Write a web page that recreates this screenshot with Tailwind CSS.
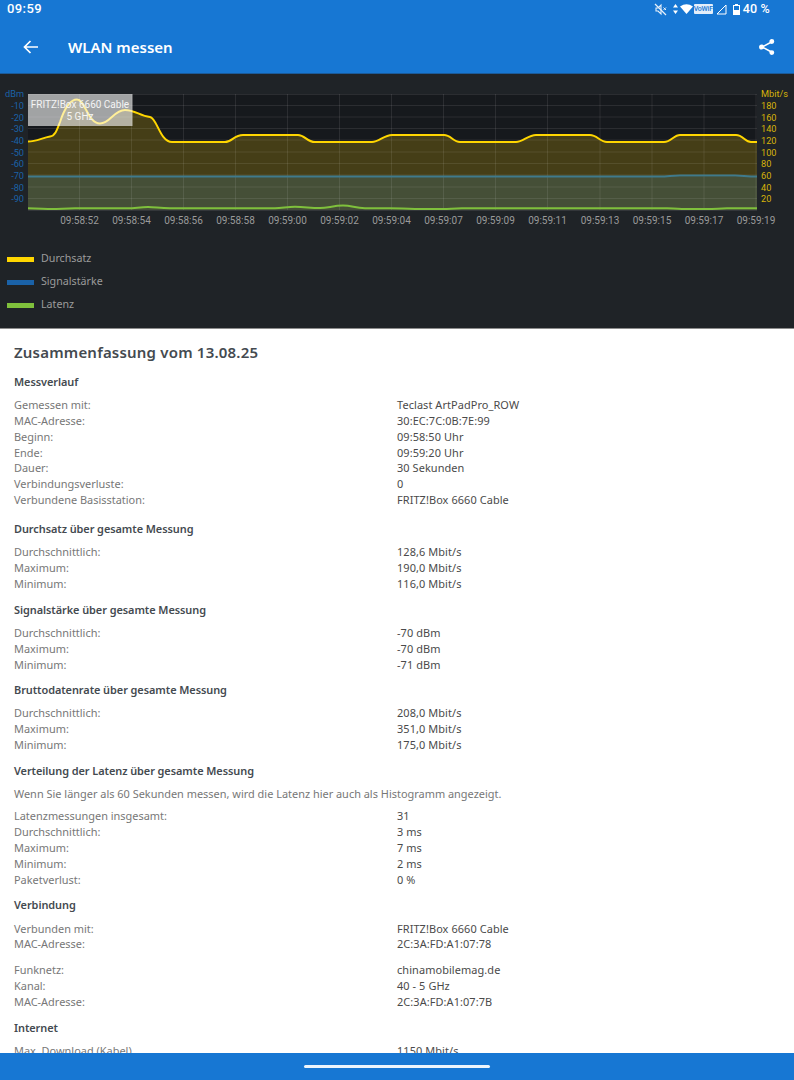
<!DOCTYPE html>
<html lang="de"><head><meta charset="utf-8"><title>WLAN messen</title>
<script src="https://cdn.jsdelivr.net/npm/@tailwindcss/browser@4"></script></head>
<body class="bg-white">
<div class="w-[794px] h-[1080px] flex flex-col overflow-hidden [font-family:'Noto_Sans',sans-serif]">
  <header class="bg-[#1777d3] text-white shrink-0 h-[74px] flex flex-col border-b border-[#1b5a98]">
    <div class="h-[21px] pb-[3px] flex items-center justify-between pl-[7px] pr-[24px] [font-family:Roboto,sans-serif]">
      <span class="text-[13px] font-medium tracking-[0.4px]">09:59</span>
      <div class="flex items-center">
        <svg width="13" height="13" viewBox="0 0 13 13" class="mr-[6px]" fill="none" stroke="#e8f1fa"><path d="M2 5h2l3-3v9L4 8H2z" stroke-width="1.1"/><path d="M1 1l11 11" stroke-width="1.3"/><path d="M9.500 4.500l2.500 2.500M12 4.500L9.500 7" stroke-width="1"/></svg>
        <svg width="5" height="10" viewBox="0 0 5 10" class="mr-[2px]" fill="#fff"><path d="M2.500 0L5 3.500H0zM2.500 10L0 6.500h5z"/></svg>
        <svg width="13" height="10" viewBox="0 0 13 10" class="mr-[1px]" fill="#fff"><path d="M0 2.500Q6.500-2 13 2.500L6.500 10z"/></svg>
        <span class="w-[19px] h-[10px] mr-[3px] rounded-[1px] bg-[#e3eefa] text-[#1777d3] text-[7px] leading-[10px] text-center font-medium tracking-[-0.2px]">VoWiFi</span>
        <svg width="11" height="11" viewBox="0 0 11 11" class="mr-[6px]" fill="none" stroke="#fff"><path d="M10 1v9H1z"/></svg>
        <svg width="7" height="11" viewBox="0 0 7 11" class="mr-[3px]" fill="#fff"><path fill-rule="evenodd" d="M2 0h3v1h2v10H0V1h2zM1 2v4h5V2z"/></svg>
        <span class="text-[12.5px] font-medium tracking-[0.2px]">40 %</span>
      </div>
    </div>
    <div class="h-[52px] flex items-center pl-[23px] pr-[18px]">
      <svg width="16" height="14" viewBox="0 0 16 14" fill="none" stroke="#fff" stroke-width="1.7"><path d="M15 7H2M7.500 1L1.500 7l6 6"/></svg>
      <span class="ml-[29px] text-[15px] font-semibold">WLAN messen</span>
      <svg width="18" height="18" viewBox="0 0 18 18" class="ml-auto" fill="#fff" stroke="#fff" stroke-width="1.5"><path d="M13.500 4L4 9l9.500 5" fill="none"/><circle cx="13.800" cy="3.500" r="1.700"/><circle cx="3.600" cy="9" r="1.800"/><circle cx="13.800" cy="14.600" r="1.700"/></svg>
    </div>
  </header>

  <section class="bg-[#1f2327] shrink-0 h-[255px] border-b border-[#8c8c8c] flex flex-col [font-family:Roboto,sans-serif]">
    <svg width="794" height="167" viewBox="0 74 794 167" class="block shrink-0 text-[9.2px]">
      <rect x="28" y="94" width="729" height="116" fill="#16191d"/>
      <path d="M28 141.500C36 141.500 42 138 50 136.500C55 136 57 130 60 122C64 110 70 99.500 77 99.500C85 99.500 88 123.500 100 123.500C110 123.500 114 110 125 110C135 110 140 116 150 117C157 118 160 142 172 142H225C232 142 234 135 243 135H298C305 135 307 142 315 142H372C379 142 384 135 392 135H444C451 135 453 142 460 142H516C523 142 528 135 536 135H590C597 135 600 142 607 142H664C671 142 674 135 680 135H736C743 135 745 142 751 142H757V210H28Z" fill="#453e17"/>
      <rect x="28" y="176.500" width="729" height="33.500" fill="#454f37"/>
      <g stroke="#fff" stroke-opacity=".09" stroke-width="1">
        <path d="M28 94.500H757M28 105.500H757M28 117H757M28 128.500H757M28 140H757M28 152H757M28 163.500H757M28 175H757M28 187H757M28 198.500H757M28 210.500H757"/>
        <path d="M79.500 94V210M131.500 94V210M183.500 94V210M235.500 94V210M287.500 94V210M339.500 94V210M391.500 94V210M443.500 94V210M495.500 94V210M547.500 94V210M600 94V210M652 94V210M704 94V210M756 94V210"/>
      </g>
      <path d="M28 176.500H660C668 176.500 672 175.500 680 175.500H735C742 175.500 747 176.500 757 176.500" fill="none" stroke="#3f7a8c" stroke-width="2"/>
      <path d="M28 208.200C38 208.200 45 209 52 209C60 209 65 208.200 75 208.200H128C135 208.200 140 207 148 207C155 207 160 208.200 170 208.200H275C282 208.200 287 206.800 295 206.800C305 206.800 310 208 320 208C328 208 333 205.600 343 205.600C352 205.600 355 208.200 365 208.200H390C400 208.200 405 209 415 209H443C450 209 453 208.300 462 208.300H667C672 208.300 675 209 682 209H707C715 209 720 208.300 727 208.300H757" fill="none" stroke="#7fc03c" stroke-width="2"/>
      <path d="M28 141.500C36 141.500 42 138 50 136.500C55 136 57 130 60 122C64 110 70 99.500 77 99.500C85 99.500 88 123.500 100 123.500C110 123.500 114 110 125 110C135 110 140 116 150 117C157 118 160 142 172 142H225C232 142 234 135 243 135H298C305 135 307 142 315 142H372C379 142 384 135 392 135H444C451 135 453 142 460 142H516C523 142 528 135 536 135H590C597 135 600 142 607 142H664C671 142 674 135 680 135H736C743 135 745 142 751 142H757" fill="none" stroke="#ffd600" stroke-width="2"/>
      <rect x="28" y="94" width="104.500" height="32" fill="#fff" fill-opacity=".6"/>
      <g fill="#f4f4f4" text-anchor="middle" class="text-[10px]">
        <text x="80" y="107.500">FRITZ!Box 6660 Cable</text><text x="80" y="119.500">5 GHz</text>
      </g>
      <g fill="#1a62a8" text-anchor="end">
        <text x="24" y="97">dBm</text><text x="24" y="108.500">-10</text><text x="24" y="120.500">-20</text><text x="24" y="132">-30</text><text x="24" y="143.500">-40</text><text x="24" y="155.500">-50</text><text x="24" y="167">-60</text><text x="24" y="178.500">-70</text><text x="24" y="190.500">-80</text><text x="24" y="202">-90</text>
      </g>
      <g fill="#d6b30a">
        <text x="761" y="97">Mbit/s</text><text x="761" y="108.500">180</text><text x="761" y="120.500">160</text><text x="761" y="132">140</text><text x="761" y="143.500">120</text><text x="761" y="155.500">100</text><text x="761" y="167">80</text><text x="761" y="178.500">60</text><text x="761" y="190.500">40</text><text x="761" y="202">20</text>
      </g>
      <g fill="#9a9a9a" text-anchor="middle" class="text-[10px]">
        <text x="79.500" y="224">09:58:52</text><text x="131.500" y="224">09:58:54</text><text x="183.500" y="224">09:58:56</text><text x="235.500" y="224">09:58:58</text><text x="287.500" y="224">09:59:00</text><text x="339.500" y="224">09:59:02</text><text x="391.500" y="224">09:59:04</text><text x="443.500" y="224">09:59:07</text><text x="495.500" y="224">09:59:09</text><text x="547.500" y="224">09:59:11</text><text x="600" y="224">09:59:13</text><text x="652" y="224">09:59:15</text><text x="704" y="224">09:59:17</text><text x="756" y="224">09:59:19</text>
      </g>
    </svg>
    <ul class="flex flex-col gap-[7px] pl-[7px] mt-[9px] text-[10.7px] leading-[16px] text-[#9b9b9b] [font-family:'Noto_Sans',sans-serif]">
      <li class="flex items-center gap-[7px]"><span class="w-[27px] h-[5px] bg-[#ffd600] mt-[2px]"></span>Durchsatz</li>
      <li class="flex items-center gap-[7px]"><span class="w-[27px] h-[5px] bg-[#1a62a8] mt-[2px]"></span>Signalstärke</li>
      <li class="flex items-center gap-[7px]"><span class="w-[27px] h-[5px] bg-[#7fc03c] mt-[2px]"></span>Latenz</li>
    </ul>
  </section>

  <main class="flex-1 overflow-hidden px-[14px] pt-[12px] text-[10.95px] leading-[15.85px] text-[#777]">
    <h1 class="text-[15px] leading-[22px] font-semibold text-[#444a50] tracking-[0.2px]">Zusammenfassung vom 13.08.25</h1>
    <h2 class="mt-[11px] h-[18px] font-semibold tracking-[-0.07px] text-[#444a50]">Messverlauf</h2>
    <dl class="mt-[5px] grid grid-cols-[383px_1fr]">
      <dt>Gemessen mit:</dt><dd class="text-[#4a4a4a] tracking-[0.08px]">Teclast ArtPadPro_ROW</dd>
      <dt>MAC-Adresse:</dt><dd class="text-[#4a4a4a] tracking-[0.08px]">30:EC:7C:0B:7E:99</dd>
      <dt>Beginn:</dt><dd class="text-[#4a4a4a] tracking-[0.08px]">09:58:50 Uhr</dd>
      <dt>Ende:</dt><dd class="text-[#4a4a4a] tracking-[0.08px]">09:59:20 Uhr</dd>
      <dt>Dauer:</dt><dd class="text-[#4a4a4a] tracking-[0.08px]">30 Sekunden</dd>
      <dt>Verbindungsverluste:</dt><dd class="text-[#4a4a4a] tracking-[0.08px]">0</dd>
      <dt>Verbundene Basisstation:</dt><dd class="text-[#4a4a4a] tracking-[0.08px]">FRITZ!Box 6660 Cable</dd>
    </dl>
    <h2 class="mt-[13px] h-[18px] font-semibold tracking-[-0.07px] text-[#444a50]">Durchsatz über gesamte Messung</h2>
    <dl class="mt-[5px] grid grid-cols-[383px_1fr]">
      <dt>Durchschnittlich:</dt><dd class="text-[#4a4a4a] tracking-[0.08px]">128,6 Mbit/s</dd>
      <dt>Maximum:</dt><dd class="text-[#4a4a4a] tracking-[0.08px]">190,0 Mbit/s</dd>
      <dt>Minimum:</dt><dd class="text-[#4a4a4a] tracking-[0.08px]">116,0 Mbit/s</dd>
    </dl>
    <h2 class="mt-[11px] h-[18px] font-semibold tracking-[-0.07px] text-[#444a50]">Signalstärke über gesamte Messung</h2>
    <dl class="mt-[5px] grid grid-cols-[383px_1fr]">
      <dt>Durchschnittlich:</dt><dd class="text-[#4a4a4a] tracking-[0.08px]">-70 dBm</dd>
      <dt>Maximum:</dt><dd class="text-[#4a4a4a] tracking-[0.08px]">-70 dBm</dd>
      <dt>Minimum:</dt><dd class="text-[#4a4a4a] tracking-[0.08px]">-71 dBm</dd>
    </dl>
    <h2 class="mt-[9px] h-[18px] font-semibold tracking-[-0.07px] text-[#444a50]">Bruttodatenrate über gesamte Messung</h2>
    <dl class="mt-[5px] grid grid-cols-[383px_1fr]">
      <dt>Durchschnittlich:</dt><dd class="text-[#4a4a4a] tracking-[0.08px]">208,0 Mbit/s</dd>
      <dt>Maximum:</dt><dd class="text-[#4a4a4a] tracking-[0.08px]">351,0 Mbit/s</dd>
      <dt>Minimum:</dt><dd class="text-[#4a4a4a] tracking-[0.08px]">175,0 Mbit/s</dd>
    </dl>
    <h2 class="mt-[10px] h-[18px] font-semibold tracking-[-0.07px] text-[#444a50]">Verteilung der Latenz über gesamte Messung</h2>
    <p class="mt-[5px]">Wenn Sie länger als 60 Sekunden messen, wird die Latenz hier auch als Histogramm angezeigt.</p>
    <dl class="mt-[7px] grid grid-cols-[383px_1fr]">
      <dt>Latenzmessungen insgesamt:</dt><dd class="text-[#4a4a4a] tracking-[0.08px]">31</dd>
      <dt>Durchschnittlich:</dt><dd class="text-[#4a4a4a] tracking-[0.08px]">3 ms</dd>
      <dt>Maximum:</dt><dd class="text-[#4a4a4a] tracking-[0.08px]">7 ms</dd>
      <dt>Minimum:</dt><dd class="text-[#4a4a4a] tracking-[0.08px]">2 ms</dd>
      <dt>Paketverlust:</dt><dd class="text-[#4a4a4a] tracking-[0.08px]">0 %</dd>
    </dl>
    <h2 class="mt-[9px] h-[18px] font-semibold tracking-[-0.07px] text-[#444a50]">Verbindung</h2>
    <dl class="mt-[6px] grid grid-cols-[383px_1fr]">
      <dt>Verbunden mit:</dt><dd class="text-[#4a4a4a] tracking-[0.08px]">FRITZ!Box 6660 Cable</dd>
      <dt>MAC-Adresse:</dt><dd class="text-[#4a4a4a] tracking-[0.08px]">2C:3A:FD:A1:07:78</dd>
    </dl>
    <dl class="mt-[10px] grid grid-cols-[383px_1fr]">
      <dt>Funknetz:</dt><dd class="text-[#4a4a4a] tracking-[0.08px]">chinamobilemag.de</dd>
      <dt>Kanal:</dt><dd class="text-[#4a4a4a] tracking-[0.08px]">40 - 5 GHz</dd>
      <dt>MAC-Adresse:</dt><dd class="text-[#4a4a4a] tracking-[0.08px]">2C:3A:FD:A1:07:7B</dd>
    </dl>
    <h2 class="mt-[10px] h-[18px] font-semibold tracking-[-0.07px] text-[#444a50]">Internet</h2>
    <dl class="mt-[5px] grid grid-cols-[383px_1fr]">
      <dt>Max. Download (Kabel)</dt><dd class="text-[#4a4a4a] tracking-[0.08px]">1150 Mbit/s</dd>
    </dl>
  </main>

  <footer class="bg-[#1777d3] shrink-0 h-[27px] flex items-center justify-center">
    <span class="w-[186px] h-[3px] rounded-full bg-[#eef5fc]"></span>
  </footer>
</div>
</body></html>
